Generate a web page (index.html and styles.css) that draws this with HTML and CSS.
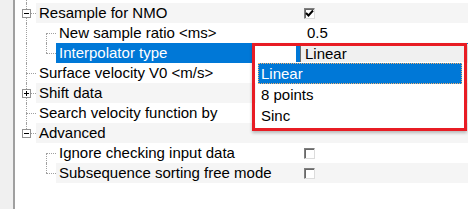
FILE: index.html
```html
<!DOCTYPE html>
<html lang="en">
<head>
    <meta charset="UTF-8">
    <title>Properties</title>
    <link rel="stylesheet" href="styles.css">
</head>
<body>
    <div class="panel">
        <div class="side"></div>
        <div class="tree">
            <div class="row cut">
                <div class="gut l0"><span class="v0"></span></div>
            </div>

            <div class="row even">
                <div class="gut l0"><span class="v0"></span><span class="h0"></span><span class="box minus"></span></div>
                <div class="label">Resample for NMO</div>
                <div class="value">
                    <span class="check">
                        <svg width="9" height="9" viewBox="0 0 9 9"><path d="M1 4 L3.5 6.5 L8 1.5" fill="none" stroke="#000" stroke-width="2"/></svg>
                    </span>
                </div>
            </div>
            <div class="row">
                <div class="gut l1"><span class="v0"></span><span class="v1 lower"></span><span class="h1"></span></div>
                <div class="label">New sample ratio &lt;ms&gt;</div>
                <div class="value"><span class="text">0.5</span></div>
            </div>
            <div class="row even sel">
                <div class="gut l1"><span class="v0"></span><span class="v1 upper"></span><span class="h1"></span></div>
                <div class="label">Interpolator type</div>
                <div class="value"><div class="edit">Linear</div></div>
            </div>
            <div class="row">
                <div class="gut l0"><span class="v0"></span><span class="h0"></span></div>
                <div class="label">Surface velocity V0 &lt;m/s&gt;</div>
                <div class="value"></div>
            </div>
            <div class="row even">
                <div class="gut l0"><span class="v0"></span><span class="h0"></span><span class="box plus"></span></div>
                <div class="label">Shift data</div>
                <div class="value"></div>
            </div>
            <div class="row">
                <div class="gut l0"><span class="v0"></span><span class="h0"></span></div>
                <div class="label">Search velocity function by</div>
                <div class="value"></div>
            </div>
            <div class="row even">
                <div class="gut l0"><span class="v0 upper"></span><span class="h0"></span><span class="box minus"></span></div>
                <div class="label">Advanced</div>
                <div class="value"></div>
            </div>
            <div class="row">
                <div class="gut l1"><span class="v1 lower"></span><span class="h1"></span></div>
                <div class="label">Ignore checking input data</div>
                <div class="value"><span class="check"></span></div>
            </div>
            <div class="row even">
                <div class="gut l1"><span class="v1 upper"></span><span class="h1"></span></div>
                <div class="label">Subsequence sorting free mode</div>
                <div class="value"><span class="check"></span></div>
            </div>
        </div>

        <!-- annotation frame round the open combo -->
        <div class="popup">
            <ul class="dropdown">
                <li class="current">Linear</li>
                <li>8 points</li>
                <li>Sinc</li>
            </ul>
        </div>
    </div>
</body>
</html>
```

FILE: styles.css
```css
body {
    margin: 0;
    padding: 0;
    font-family: 'Liberation Sans', Arial, sans-serif;
    font-size: 15px;
    color: #000;
    background: #fff;
}

.panel {
    position: relative;
    display: flex;
    width: 468px;
    height: 209px;
    overflow: hidden;
}

.side {
    width: 13px;
    background-color: #f0f0f0;
    border-right: 2px solid #a0a0a0;
}

.tree {
    flex: 1;
    display: flex;
    flex-direction: column;
}

.row {
    display: flex;
    height: 20px;
    line-height: 20px;
}

.row.cut {
    height: 3px;
}

.gut {
    position: relative;
    flex-shrink: 0;
}

.gut.l0 {
    width: 21px;
}

.gut.l1 {
    width: 41px;
}

/* tree connector lines */
.v0, .v1, .h0, .h1 {
    position: absolute;
}

.v0 {
    left: 11px;
    top: 0;
    bottom: 0;
    border-left: 1px dotted #a0a0a0;
}

.v0.upper {
    bottom: 10px;
}

.v1 {
    left: 31px;
    top: 0;
    bottom: 0;
    border-left: 1px dotted #a0a0a0;
}

.v1.upper {
    bottom: 10px;
}

.v1.lower {
    top: 10px;
}

.h0 {
    left: 11px;
    width: 10px;
    top: 10px;
    border-top: 1px dotted #a0a0a0;
}

.h1 {
    left: 31px;
    width: 10px;
    top: 10px;
    border-top: 1px dotted #a0a0a0;
}

.box {
    position: absolute;
    left: 7px;
    top: 6px;
    width: 7px;
    height: 7px;
    border: 1px solid #919191;
    background: #fff;
}

.box::before,
.box::after {
    content: '';
    position: absolute;
    background: #000;
}

.box::before {
    left: 1px;
    top: 3px;
    width: 5px;
    height: 1px;
}

.box.plus::after {
    left: 3px;
    top: 1px;
    width: 1px;
    height: 5px;
}

.label {
    flex: 1;
    padding-left: 3px;
    white-space: nowrap;
    overflow: hidden;
}

.value {
    width: 168px;
    flex-shrink: 0;
    display: flex;
    align-items: center;
}

.row.even .label,
.row.even .value {
    background-color: #f5f5f5;
}

.row.sel .label {
    background: linear-gradient(to right, #0078d7 198px, #fff 198px);
    color: #fff;
}

.row.sel .value {
    background-color: #0078d7;
    padding-left: 4px;
    align-items: stretch;
}

.edit {
    flex: 1;
    margin-top: 1px;
    padding-left: 4px;
    background-color: #f0f0f0;
    border-left: 1px solid #6d6d6d;
    line-height: 19px;
}

.text {
    padding-left: 7px;
}

.check {
    display: flex;
    margin-left: 4px;
    width: 9px;
    height: 9px;
    background: #fff;
    border-top: 1px solid #808080;
    border-left: 1px solid #808080;
    border-right: 1px solid #dcdcdc;
    border-bottom: 1px solid #dcdcdc;
    box-shadow: inset 1px 1px 0 #696969;
}

.popup {
    position: absolute;
    left: 252px;
    top: 43px;
    width: 215px;
    height: 88px;
    box-sizing: border-box;
    border: 3px solid #e81c24;
    box-shadow: 0 2px 3px rgba(0, 0, 0, 0.25);
}

.dropdown {
    list-style: none;
    margin: 16px 0 0 1px;
    padding: 1px 2px 1px 2px;
    background: #fff;
    height: 64px;
}

.dropdown li {
    height: 21px;
    line-height: 21px;
    padding-left: 3px;
}

.dropdown li.current {
    background-color: #0078d7;
    color: #fff;
    outline: 1px dotted #f0b070;
    outline-offset: -1px;
}
```
